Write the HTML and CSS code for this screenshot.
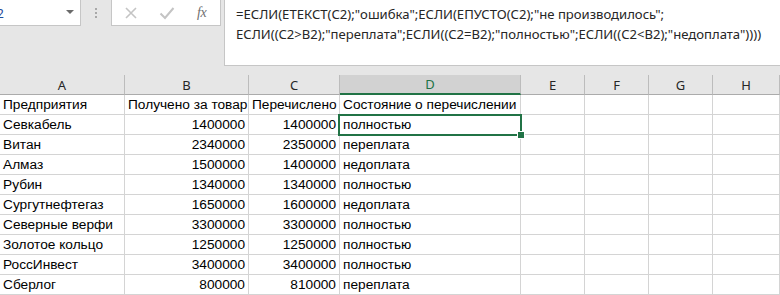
FILE: index.html
```html
<!DOCTYPE html>
<html lang="ru">
<head>
<meta charset="utf-8">
<link rel="stylesheet" href="styles.css">
</head>
<body>
<div class="app">
  <div class="topbar">
    <div class="namebox"><span class="name">D2</span><span class="caret"></span></div>
    <div class="grip"><i></i><i></i><i></i></div>
    <div class="fxbox">
      <svg class="ico" width="14" height="14" viewBox="0 0 14 14"><path d="M2 2 L12 12 M12 2 L2 12" stroke="#c4c4c4" stroke-width="1.6" fill="none"/></svg>
      <svg class="ico" width="16" height="14" viewBox="0 0 16 14"><path d="M1.5 7.5 L6 12 L14.5 2" stroke="#c4c4c4" stroke-width="2" fill="none"/></svg>
      <span class="fx">fx</span>
    </div>
    <div class="formula">=ЕСЛИ(ЕТЕКСТ(С2);"ошибка";ЕСЛИ(ЕПУСТО(С2);"не производилось";<br>ЕСЛИ((C2&gt;B2);"переплата";ЕСЛИ((C2=B2);"полностью";ЕСЛИ((C2&lt;B2);"недоплата"))))</div>
  </div>
  <div class="sheet">
    <div class="grid">
      <div class="hd">A</div><div class="hd">B</div><div class="hd">C</div><div class="hd sel">D</div><div class="hd">E</div><div class="hd">F</div><div class="hd">G</div><div class="hd">H</div>

      <div class="c">Предприятия</div><div class="c">Получено за товар</div><div class="c">Перечислено</div><div class="c">Состояние о перечислении</div><div class="c"></div><div class="c"></div><div class="c"></div><div class="c"></div>

      <div class="c">Севкабель</div><div class="c n">1400000</div><div class="c n">1400000</div><div class="c">полностью</div><div class="c"></div><div class="c"></div><div class="c"></div><div class="c"></div>

      <div class="c">Витан</div><div class="c n">2340000</div><div class="c n">2350000</div><div class="c">переплата</div><div class="c"></div><div class="c"></div><div class="c"></div><div class="c"></div>

      <div class="c">Алмаз</div><div class="c n">1500000</div><div class="c n">1400000</div><div class="c">недоплата</div><div class="c"></div><div class="c"></div><div class="c"></div><div class="c"></div>

      <div class="c">Рубин</div><div class="c n">1340000</div><div class="c n">1340000</div><div class="c">полностью</div><div class="c"></div><div class="c"></div><div class="c"></div><div class="c"></div>

      <div class="c">Сургутнефтегаз</div><div class="c n">1650000</div><div class="c n">1600000</div><div class="c">недоплата</div><div class="c"></div><div class="c"></div><div class="c"></div><div class="c"></div>

      <div class="c">Северные верфи</div><div class="c n">3300000</div><div class="c n">3300000</div><div class="c">полностью</div><div class="c"></div><div class="c"></div><div class="c"></div><div class="c"></div>

      <div class="c">Золотое кольцо</div><div class="c n">1250000</div><div class="c n">1250000</div><div class="c">полностью</div><div class="c"></div><div class="c"></div><div class="c"></div><div class="c"></div>

      <div class="c">РоссИнвест</div><div class="c n">3400000</div><div class="c n">3400000</div><div class="c">полностью</div><div class="c"></div><div class="c"></div><div class="c"></div><div class="c"></div>

      <div class="c">Сберлог</div><div class="c n">800000</div><div class="c n">810000</div><div class="c">переплата</div><div class="c"></div><div class="c"></div><div class="c"></div><div class="c"></div>
    </div>
    <div class="selbox"><span class="handle"></span></div>
  </div>
</div>
</body>
</html>
```

FILE: styles.css
```css
* { box-sizing: border-box; }
html, body { margin: 0; padding: 0; background: #e6e6e6; overflow: hidden; }
.app { width: 780px; height: 295px; overflow: hidden; background: #e6e6e6; }

.topbar { display: flex; height: 75px; align-items: flex-start; }
.namebox {
  width: 81px; height: 26px; background: #fff;
  border-right: 1px solid #c6c6c6; border-bottom: 1px solid #c6c6c6;
  position: relative; overflow: hidden;
  font: 13px "Noto Sans", sans-serif; color: #1f4e9c;
}
.name { position: absolute; left: -13px; top: 4px; }
.caret {
  position: absolute; left: 66px; top: 10px;
  border-left: 4px solid transparent; border-right: 4px solid transparent;
  border-top: 4px solid #6a6a6a;
}
.grip { width: 30px; display: flex; flex-direction: column; align-items: center; gap: 2px; padding-top: 8px; }
.grip i { display: block; width: 2px; height: 2px; background: #a8a8a8; }
.fxbox {
  width: 110px; height: 26px; background: #fff;
  border: 1px solid #c6c6c6; border-top: none;
  display: flex; align-items: center; padding-left: 12px; gap: 21px;
}
.fxbox .ico { display: block; }
.fx { font: italic 14px "Liberation Serif", serif; color: #707070; margin-left: 1px; letter-spacing: -0.5px; }
.formula {
  margin-left: 3px; flex: 1; height: 66px; background: #fff;
  border-left: 1px solid #c6c6c6; border-bottom: 1px solid #c6c6c6;
  padding: 5px 0 0 11px;
  font: 13.1px/19.5px "Noto Sans", sans-serif; color: #262626; white-space: nowrap;
}

.sheet { position: relative; }
.grid {
  display: grid;
  grid-template-columns: 125px 124px 91px 181px 64px 64px 64px 1fr;
  grid-auto-rows: 20px;
  background: #fff;
}
.hd {
  height: 20px; background: #e6e6e6;
  border-right: 1px solid #bcbcbc; border-bottom: 1px solid #ababab;
  display: flex; align-items: center; justify-content: center;
  font: 13px "Noto Sans", sans-serif; color: #262626;
}
.hd.sel { background: #d2d2d2; color: #217346; border-bottom: 2px solid #217346; }
.c {
  border-right: 1px solid #d4d4d4; border-bottom: 1px solid #d4d4d4;
  padding: 0 3px; white-space: nowrap; overflow: visible;
  font: 13.7px/20px "Liberation Sans", sans-serif; color: #000;
}
.c.n { text-align: right; }
.selbox {
  position: absolute; left: 338px; top: 39px; width: 184px; height: 22px;
  border: 2px solid #217346;
}
.handle {
  position: absolute; right: -4px; bottom: -4px; width: 6px; height: 6px;
  background: #217346; border: 1px solid #fff; box-sizing: content-box;
  margin: -1px;
}
```
